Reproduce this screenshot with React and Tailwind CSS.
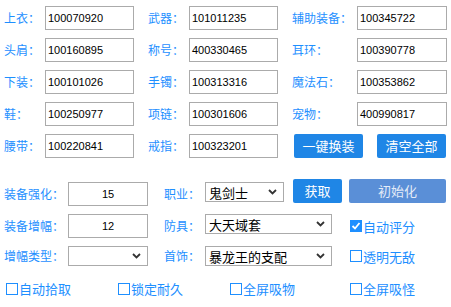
const cjk = { fontFamily: '"Noto Sans CJK SC", "Liberation Sans", sans-serif' };
const num = { fontFamily: '"Liberation Sans", "DejaVu Sans", sans-serif' };

const top = [
  [["上衣：", "100070920"], ["武器：", "101011235"], ["辅助装备：", "100345722"]],
  [["头肩：", "100160895"], ["称号：", "400330465"], ["耳环：", "100390778"]],
  [["下装：", "100101026"], ["手镯：", "100313316"], ["魔法石：", "100353862"]],
  [["鞋：", "100250977"], ["项链：", "100301606"], ["宠物：", "400990817"]],
  [["腰带：", "100220841"], ["戒指：", "100323201"]],
];

function Label({ children, w }) {
  return (
    <div className={`${w} shrink-0 text-[12px] text-[#1e8fff] leading-none`} style={cjk}>
      {children}
    </div>
  );
}

function Box({ value, w, center }) {
  return (
    <div
      className={`${w} h-[24px] shrink-0 border border-[#ababab] bg-white flex items-center px-[2px] text-[11px] text-black ${center ? "justify-center" : ""}`}
      style={num}
    >
      {value}
    </div>
  );
}

function Select({ value, w, h = "h-[20px]" }) {
  return (
    <div className={`${w} ${h} shrink-0 border border-[#ababab] bg-white flex items-center pl-[3px] pr-[6px] text-[13px] text-black`} style={cjk}>
      <span className="flex-1 leading-none">{value}</span>
      <svg width="9" height="6" viewBox="0 0 9 6">
        <path d="M1 1 L4.5 4.5 L8 1" fill="none" stroke="#333" strokeWidth="1.8" />
      </svg>
    </div>
  );
}

function Check({ label, checked }) {
  return (
    <div className="flex items-center gap-[1px] text-[13px] text-[#1e8fff] leading-none" style={cjk}>
      {checked ? (
        <div className="w-[12px] h-[12px] bg-[#1e8fff] flex items-center justify-center">
          <svg width="10" height="10" viewBox="0 0 10 10">
            <path d="M1.5 5 L4 7.5 L8.5 2" fill="none" stroke="#fff" strokeWidth="1.8" />
          </svg>
        </div>
      ) : (
        <div className="w-[12px] h-[12px] border border-[#1e8fff] bg-white" />
      )}
      <span>{label}</span>
    </div>
  );
}

function Btn({ children, w, light }) {
  return (
    <div
      className={`${w} h-[24px] rounded-[2px] flex items-center justify-center text-[13px] ${light ? "bg-[#5a8fd7] text-[#e4ecf8]" : "bg-[#1f86e6] text-white"}`}
      style={cjk}
    >
      {children}
    </div>
  );
}

export default function App() {
  return (
    <div className="w-[451px] h-[307px] bg-white overflow-hidden pl-[4px] pt-[6px]">
      <div className="flex flex-col gap-[8px]">
        {top.map((row, i) => (
          <div key={i} className="flex items-center h-[24px]">
            <Label w="w-[41px]">{row[0][0]}</Label>
            <Box w="w-[89px]" value={row[0][1]} />
            <div className="w-[14px]" />
            <Label w="w-[41px]">{row[1][0]}</Label>
            <Box w="w-[89px]" value={row[1][1]} />
            <div className="w-[14px]" />
            {row[2] ? (
              <>
                <Label w="w-[65px]">{row[2][0]}</Label>
                <Box w="w-[90px]" value={row[2][1]} />
              </>
            ) : (
              <div className="flex gap-[14px] pl-[2px]">
                <Btn w="w-[69px]">一键换装</Btn>
                <Btn w="w-[69px]">清空全部</Btn>
              </div>
            )}
          </div>
        ))}
      </div>

      <div className="mt-[21px] flex h-[27px]">
        <div className="w-[64px] self-center pt-[3px]"><Label w="w-[64px]">装备强化：</Label></div>
        <div className="self-end"><Box w="w-[80px]" value="15" center /></div>
        <div className="w-[16px]" />
        <div className="w-[41px] self-center pt-[3px]"><Label w="w-[41px]">职业：</Label></div>
        <div className="self-start mt-[3px]"><Select w="w-[79px]" value="鬼剑士" /></div>
        <div className="w-[9px]" />
        <Btn w="w-[49px]">获取</Btn>
        <div className="w-[7px]" />
        <Btn w="w-[97px]" light>初始化</Btn>
      </div>

      <div className="mt-[8px] flex items-center h-[24px]">
        <Label w="w-[64px]">装备增幅：</Label>
        <Box w="w-[80px]" value="12" center />
        <div className="w-[16px]" />
        <Label w="w-[41px]">防具：</Label>
        <div className="self-start"><Select w="w-[127px]" value="大天域套" /></div>
        <div className="w-[18px]" />
        <Check label="自动评分" checked />
      </div>

      <div className="mt-[8px] flex items-center h-[20px]">
        <Label w="w-[64px]">增幅类型：</Label>
        <Select w="w-[80px]" value="" />
        <div className="w-[16px]" />
        <Label w="w-[41px]">首饰：</Label>
        <Select w="w-[127px]" value="暴龙王的支配" />
        <div className="w-[18px]" />
        <Check label="透明无敌" />
      </div>

      <div className="mt-[16px] flex items-center pl-[2px]">
        <div className="w-[112px]"><Check label="自动拾取" /></div>
        <div className="w-[112px]"><Check label="锁定耐久" /></div>
        <div className="w-[120px]"><Check label="全屏吸物" /></div>
        <Check label="全屏吸怪" />
      </div>
    </div>
  );
}
